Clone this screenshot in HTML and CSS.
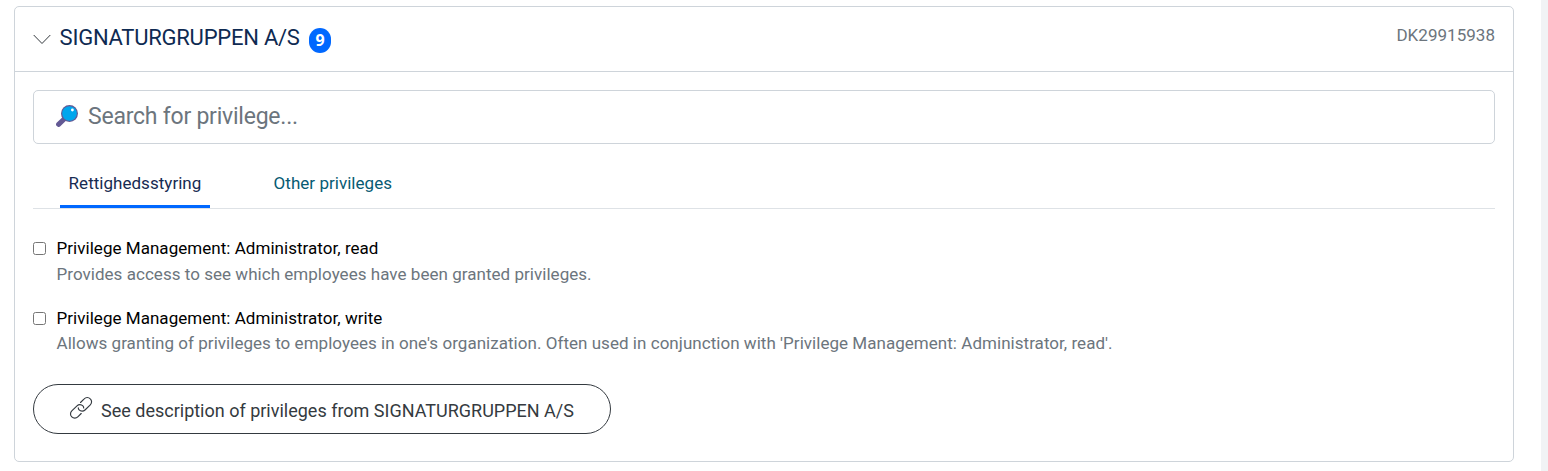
FILE: index.html
```html
<!DOCTYPE html>
<html lang="en">
<head>
<meta charset="utf-8">
<title>Privileges</title>
<link rel="stylesheet" href="styles.css">
</head>
<body>
<main class="page">
  <section class="card">
    <header class="card-header">
      <svg class="chevron" viewBox="0 0 18 12" width="18" height="12"><path d="M.7 1 9 9.500l8.300-8.500"/></svg>
      <h2 class="title">SIGNATURGRUPPEN A/S</h2>
      <span class="badge">9</span>
      <span class="cvr">DK29915938</span>
    </header>
    <div class="card-body">
      <div class="search">
        <svg class="search-icon" viewBox="0 0 22 22" width="22" height="22">
          <path class="handle" d="M2.600 19.400 8.500 13.800"/>
          <circle class="rim" cx="13.500" cy="8.500" r="8.500"/>
          <circle class="lens" cx="13.500" cy="8.500" r="7.300"/>
          <circle class="shine" cx="16.400" cy="5" r="1.400"/>
        </svg>
        <input class="search-input" type="text" placeholder="Search for privilege...">
      </div>
      <nav class="tabs">
        <a class="tab tab-active">Rettighedsstyring</a>
        <a class="tab tab-other">Other privileges</a>
      </nav>
      <div class="privilege">
        <input class="check" type="checkbox">
        <div class="privilege-text">
          <div class="name">Privilege Management: Administrator, read</div>
          <div class="description">Provides access to see which employees have been granted privileges.</div>
        </div>
      </div>
      <div class="privilege">
        <input class="check" type="checkbox">
        <div class="privilege-text">
          <div class="name">Privilege Management: Administrator, write</div>
          <div class="description">Allows granting of privileges to employees in one's organization. Often used in conjunction with 'Privilege Management: Administrator, read'.</div>
        </div>
      </div>
      <a class="button">
        <svg class="link-icon" viewBox="0 0 24 24" width="24" height="24">
          <path d="M11.500 6.500 15.200 2.800a4.150 4.150 0 0 1 6.100 0 4.150 4.150 0 0 1 0 6L16 14a4.150 4.150 0 0 1-5.900-.1 3 3 0 0 1-.8-2"/>
          <path d="M12.200 17.500 8.800 20.900a4.150 4.150 0 0 1-6 0 4.150 4.150 0 0 1 0-6L8 9.800a4.150 4.150 0 0 1 5.900.1 3 3 0 0 1 .8 2"/>
        </svg>
        <span>See description of privileges from SIGNATURGRUPPEN A/S</span>
      </a>
    </div>
  </section>
</main>
</body>
</html>
```

FILE: styles.css
```css
* { box-sizing: border-box; }

body {
  margin: 0;
  background: #f1f3f5;
  font-family: Roboto, "Liberation Sans", sans-serif;
  overflow: hidden;
}

.page {
  width: 1541px;
  height: 471px;
  padding: 6px 0 0 14px;
  background: #fff;
}

.card {
  width: 1500px;
  height: 456px;
  border: 1px solid #ced4da;
  border-radius: 5px;
}

.card-header {
  display: flex;
  height: 65px;
  padding: 0 18px;
  border-bottom: 1px solid #ced4da;
}

.chevron { margin-top: 27px; }
.chevron path { fill: none; stroke: #33383d; stroke-width: 1; }

.title {
  margin: 15px 0 0 8.600px;
  color: #0e2a52;
  font-size: 22px;
  font-weight: 400;
  line-height: 32px;
  letter-spacing: -0.235px;
}

.badge {
  width: 22px;
  height: 25px;
  margin: 21px 0 0 9.500px;
  border-radius: 11px;
  background: #0068ff;
  color: #fff;
  font: 700 16px/24px "Noto Sans", sans-serif;
  text-align: center;
}

.cvr {
  margin: 16px 0 0 auto;
  color: #6c757d;
  font-size: 17px;
  line-height: 24px;
  letter-spacing: 0.030px;
}

.card-body { padding: 18px 18px 0; }

.search {
  display: flex;
  height: 54px;
  padding: 0 22px;
  border: 1px solid #ced4da;
  border-radius: 5px;
}

.search-icon { flex: none; margin-top: 14px; }
.handle { stroke: #635994; stroke-width: 5; stroke-linecap: round; }
.rim { fill: #635994; }
.lens { fill: #00a6ed; }
.shine { fill: #fff; }

.search-input {
  flex: 1;
  height: 50px;
  margin-left: 10px;
  padding: 0;
  border: 0;
  outline: 0;
  background: none;
  font: 400 23px Roboto, sans-serif;
  letter-spacing: -0.230px;
}
.search-input::placeholder { color: #6c757d; opacity: 1; }

.tabs {
  display: flex;
  gap: 55px;
  height: 65px;
  padding: 26px 27px 0;
  border-bottom: 1px solid #dee2e6;
}

.tab {
  height: 38px;
  padding: 0 8.600px;
  font-size: 17px;
  line-height: 26px;
  letter-spacing: 0.030px;
}
.tab-active { width: 150px; border-bottom: 3px solid #0068ff; color: #172b52; }
.tab-other { color: #075b73; }

.privilege {
  display: flex;
  gap: 10.500px;
  height: 69.500px;
}
.tabs + .privilege { margin-top: 26px; }

.check { width: 13px; height: 13px; margin: 7px 0 0; flex: none; }

.privilege-text {
  padding-top: 1px;
  font-size: 17px;
  line-height: 25.500px;
  letter-spacing: 0.036px;
}
.name { color: #000; }
.description { color: #6c757d; }

.button {
  display: flex;
  width: 578px;
  height: 50px;
  margin-top: 10px;
  padding: 0 35px;
  gap: 8px;
  border: 1px solid #343a40;
  border-radius: 25px;
  color: #343a40;
  font-size: 18px;
  line-height: 51px;
  white-space: nowrap;
}
.link-icon { flex: none; margin-top: 11px; }
.link-icon path { fill: none; stroke: #343a40; stroke-width: 1.150; stroke-linecap: round; }
```
